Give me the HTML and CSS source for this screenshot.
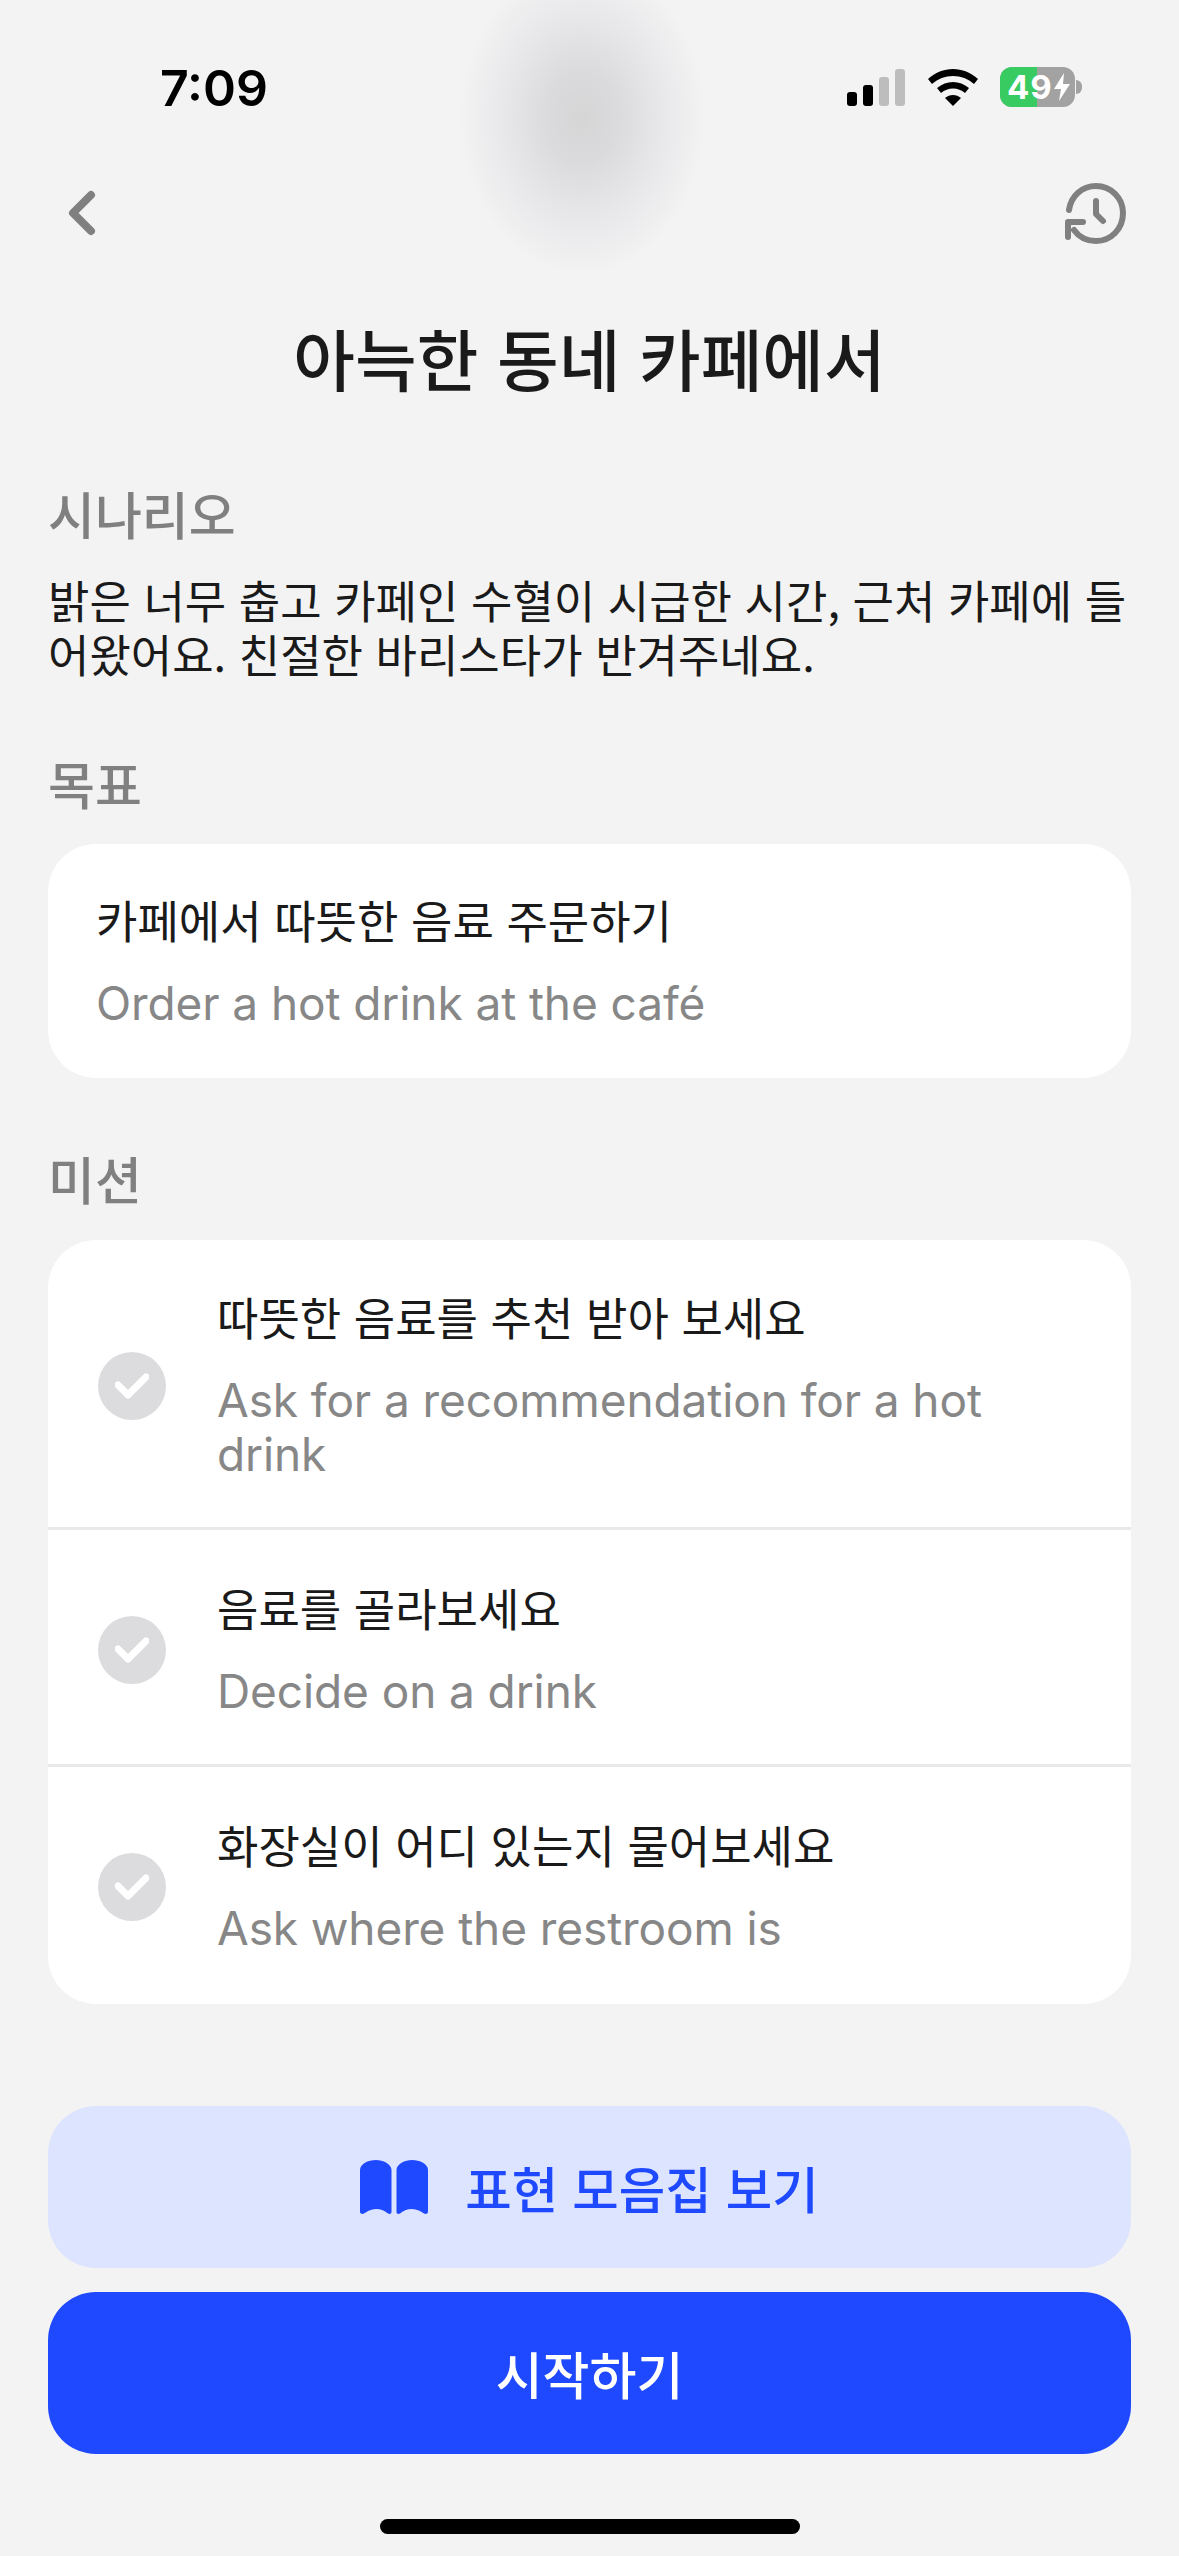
FILE: index.html
```html
<!DOCTYPE html>
<html lang="ko">
<head>
<meta charset="utf-8">
<title>아늑한 동네 카페에서</title>
<link rel="stylesheet" href="styles.css">
</head>
<body>
<div class="blob"></div>
<div class="phone">
  <header class="status">
    <span class="time">7:09</span>
    <div class="status-icons">
      <svg class="signal" width="58" height="37" viewBox="0 0 58 37"><rect x="0" y="23" width="10" height="14" rx="3" fill="#000"/><rect x="16" y="16" width="10" height="21" rx="3" fill="#000"/><rect x="32" y="8" width="10" height="29" rx="3" fill="#bdbdbd"/><rect x="48" y="0" width="10" height="37" rx="3" fill="#bdbdbd"/></svg>
      <svg class="wifi" width="50" height="37" viewBox="0 0 50 37"><path d="M25 0C34 0 43 3.600 50 10L46 15C40 9.800 33 7 25 7C17 7 10 9.800 4 15L0 10C7 3.600 16 0 25 0Z" fill="#000"/><path d="M25 13C31 13 36 15 41 19L37 24C33.500 21 29.500 19.500 25 19.500C20.500 19.500 16.500 21 13 24L9 19C14 15 19 13 25 13Z" fill="#000"/><path d="M25 26C28 26 30.500 27 33 29L25 37L17 29C19.500 27 22 26 25 26Z" fill="#000"/></svg>
      <div class="battery">
        <div class="battery-body"><div class="battery-fill"></div><span class="battery-num">49</span><svg class="bolt" width="16" height="28" viewBox="0 0 16 28"><path d="M10 0L0 16H7L5 28L16 11H9Z" fill="#fff"/></svg></div>
        <div class="battery-nub"></div>
      </div>
    </div>
  </header>
  <nav class="nav">
    <svg class="back" width="30" height="46" viewBox="0 0 30 46"><path d="M25 5L7 23L25 41" fill="none" stroke="#808080" stroke-width="8" stroke-linecap="round" stroke-linejoin="round"/></svg>
    <svg class="history" width="62" height="62" viewBox="0 0 62 62"><path d="M4 27C6 13 17 3 31 3C46 3 58 15 58 30C58 46 46 58 31 58C22 58 14 54 9 47" fill="none" stroke="#808080" stroke-width="6" stroke-linecap="round"/><path d="M3 54V39H18" fill="none" stroke="#808080" stroke-width="6" stroke-linecap="round" stroke-linejoin="round"/><path d="M31 18V31L38 38" fill="none" stroke="#808080" stroke-width="6" stroke-linecap="round" stroke-linejoin="round"/></svg>
  </nav>
  <h1 class="title">아늑한 동네 카페에서</h1>
  <main class="content">
    <h2 class="label label-first">시나리오</h2>
    <p class="scenario">밝은 너무 춥고 카페인 수혈이 시급한 시간, 근처 카페에 들어왔어요. 친절한 바리스타가 반겨주네요.</p>
    <h2 class="label label-goal">목표</h2>
    <section class="card goal">
      <div class="ko">카페에서 따뜻한 음료 주문하기</div>
      <div class="en">Order a hot drink at the café</div>
    </section>
    <h2 class="label label-mission">미션</h2>
    <section class="card missions">
      <div class="mission">
        <span class="check"><svg width="34" height="26" viewBox="0 0 34 26"><path d="M3 12L13 22L31 4" fill="none" stroke="#fff" stroke-width="7" stroke-linecap="round" stroke-linejoin="round"/></svg></span>
        <div class="mission-text"><div class="ko">따뜻한 음료를 추천 받아 보세요</div><div class="en">Ask for a recommendation for a hot drink</div></div>
      </div>
      <div class="mission">
        <span class="check"><svg width="34" height="26" viewBox="0 0 34 26"><path d="M3 12L13 22L31 4" fill="none" stroke="#fff" stroke-width="7" stroke-linecap="round" stroke-linejoin="round"/></svg></span>
        <div class="mission-text"><div class="ko">음료를 골라보세요</div><div class="en">Decide on a drink</div></div>
      </div>
      <div class="mission">
        <span class="check"><svg width="34" height="26" viewBox="0 0 34 26"><path d="M3 12L13 22L31 4" fill="none" stroke="#fff" stroke-width="7" stroke-linecap="round" stroke-linejoin="round"/></svg></span>
        <div class="mission-text"><div class="ko">화장실이 어디 있는지 물어보세요</div><div class="en">Ask where the restroom is</div></div>
      </div>
    </section>
    <button class="btn btn-soft">
      <svg width="68" height="54" viewBox="0 0 68 54"><path d="M0 10C0 4 8 0 16 0C23 0 31.500 4 31.500 10V52C31.500 54 29.500 54.500 28 53.500C25 51 21 49 16 49C11 49 7 51.500 4 53.500C2 54.500 0 53.500 0 52Z" fill="#1f49ff"/><path d="M36.500 10C36.500 4 45 0 52 0C60 0 68 4 68 10V52C68 53.500 66 54.500 64 53.500C61 51.500 57 49 52 49C47 49 43 51 40 53.500C38.500 54.500 36.500 54 36.500 52Z" fill="#1f49ff"/></svg>
      <span>표현 모음집 보기</span>
    </button>
    <button class="btn btn-primary">시작하기</button>
  </main>
</div>
<div class="home-bar"></div>
</body>
</html>
```
FILE: styles.css
```css
* { box-sizing: border-box; }
html, body { margin: 0; padding: 0; }
body {
  width: 1179px;
  height: 2556px;
  background: #f3f3f3;
  font-family: "Noto Sans CJK KR", "Noto Sans", sans-serif;
  overflow: hidden;
  position: relative;
}
.blob {
  position: absolute;
  left: 460px;
  top: -40px;
  width: 245px;
  height: 315px;
  background: radial-gradient(ellipse closest-side, #d6d5d6 0%, #dbdadc 30%, #e7e6e9 62%, #f3f3f3 100%);
}
.phone { position: relative; }
.status {
  height: 170px;
  padding: 0 97px 0 160px;
  display: flex;
  justify-content: space-between;
  align-items: flex-start;
}
.time {
  font-family: "Inter", sans-serif;
  font-weight: 600;
  font-size: 50px;
  line-height: 60px;
  margin-top: 58px;
  color: #000;
}
.status-icons { display: flex; align-items: center; margin-top: 67px; }
.signal { margin-right: 23px; }
.wifi { margin-right: 22px; }
.battery { display: flex; align-items: center; }
.battery-body {
  position: relative;
  width: 75px;
  height: 40px;
  border-radius: 12px;
  background: #a2a2a2;
  overflow: hidden;
  display: flex;
  align-items: center;
  padding-left: 7px;
  color: #fff;
}
.battery-fill { position: absolute; left: 0; top: 0; bottom: 0; width: 37px; background: #38cb61; }
.battery-num { position: relative; font-family: "Inter", sans-serif; font-weight: 700; font-size: 33px; line-height: 40px; letter-spacing: 1px; }
.bolt { position: relative; margin-left: 1px; }
.battery-nub { width: 6px; height: 14px; background: #a2a2a2; border-radius: 0 7px 7px 0; margin-left: 1px; }
.nav {
  height: 80px;
  padding: 13px 52px 0 66px;
  display: flex;
  justify-content: space-between;
  align-items: flex-start;
}
.back { margin-top: 7px; }
.title {
  margin: 62px 0 0;
  text-align: center;
  font-size: 67px;
  line-height: 90px;
  font-weight: 500;
  color: #1a1a1a;
}
.content { padding: 0 48px; }
.label {
  margin: 0;
  font-size: 51px;
  line-height: 60px;
  font-weight: 500;
  color: #808080;
}
.label-first { margin-top: 81px; }
.label-goal { margin-top: 72px; }
.label-mission { margin-top: 70px; }
.scenario {
  margin: 30px 0 0;
  font-size: 45px;
  line-height: 54px;
  color: #1a1a1a;
  word-break: break-all;
}
.card { background: #fff; border-radius: 48px; }
.goal { margin-top: 31px; padding: 49px 48px 48px; }
.missions { margin-top: 32px; }
.ko { font-size: 45px; line-height: 54px; color: #1a1a1a; }
.en {
  margin-top: 29px;
  font-family: "Inter", "Noto Sans", sans-serif;
  font-size: 46px;
  line-height: 54px;
  letter-spacing: -0.1px;
  color: #878787;
}
.mission {
  display: flex;
  align-items: center;
  padding: 51px 48px 46px 50px;
  border-bottom: 3px solid #e9e9eb;
}
.mission:first-child { padding-top: 50px; }
.mission:last-child { border-bottom-color: transparent; }
.check {
  flex: none;
  width: 68px;
  height: 68px;
  border-radius: 50%;
  background: #dcdcdf;
  display: flex;
  align-items: center;
  justify-content: center;
  margin-right: 51px;
}
.btn {
  display: flex;
  align-items: center;
  justify-content: center;
  width: 100%;
  height: 162px;
  border: 0;
  border-radius: 48px;
  font-family: "Noto Sans CJK KR", sans-serif;
  font-size: 51px;
  font-weight: 500;
}
.btn-soft { margin-top: 102px; background: #dce4ff; color: #1f49ff; gap: 37px; font-size: 50.5px; }
.btn-primary { margin-top: 24px; background: #1f49ff; color: #fff; }
.home-bar {
  position: absolute;
  left: 380px;
  bottom: 22px;
  width: 420px;
  height: 15px;
  border-radius: 8px;
  background: #000;
}
```
